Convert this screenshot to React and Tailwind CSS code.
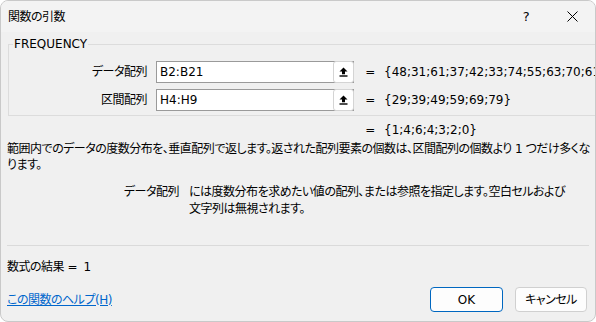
import React from "react";

const font = "font-['DejaVu_Sans','Noto_Sans_CJK_JP',sans-serif] [font-feature-settings:'palt'] tracking-[-0.5px]";

// small "select range" button at the end of each argument box
function RefButton() {
  return (
    <div className="-my-px -mr-px flex h-[22px] w-[21px] items-center justify-center rounded-[3px] border border-[#d4d4d4] bg-white">
      <svg width="9" height="10" viewBox="0 0 9 10">
        <path d="M4.5 0.5 L8.5 4.5 L6 4.5 L6 7.2 L3 7.2 L3 4.5 L0.5 4.5 Z" fill="#000" />
        <rect x="0.5" y="8.3" width="8" height="1.4" fill="#000" />
      </svg>
    </div>
  );
}

function ArgRow({ label, value, result }) {
  return (
    <div className="flex h-[22px] items-center">
      <div className="w-[139px] pr-px text-right">{label}</div>
      <div className="ml-[8px] flex h-[22px] w-[198px] items-center border border-[#9a9a9a] bg-white">
        <div className="flex-1 pl-[3px] tracking-normal">{value}</div>
        <RefButton />
      </div>
      <div className="ml-[8px] w-[16px] text-center">=</div>
      <div className="ml-[6px] mr-[7px] min-w-0 flex-1 overflow-hidden whitespace-nowrap tracking-normal">{result}</div>
    </div>
  );
}

export default function App() {
  return (
    <div className={`h-[322px] w-[596px] bg-white text-[12px] leading-[16px] text-black ${font}`}>
      <div className="flex h-full flex-col overflow-hidden rounded-[8px] border border-[#c9c9c9] bg-[#f0f0f0]">
        {/* title bar */}
        <div className="flex h-[31px] shrink-0 items-center bg-[#f3f3f3] pl-[7px]">
          <span>関数の引数</span>
          <div className="ml-auto flex items-center">
            <div className="w-[46px] text-center text-[13px]">?</div>
            <div className="flex w-[46px] items-center justify-center">
              <svg width="11" height="11" viewBox="0 0 11 11">
                <path d="M0.5 0.5 L10.5 10.5 M10.5 0.5 L0.5 10.5" stroke="#000" strokeWidth="1" />
              </svg>
            </div>
          </div>
        </div>

        <div className="flex flex-1 flex-col px-[6px] pt-[4px]">
          <fieldset className="mx-px border border-[#dcdcdc] px-0 pb-[4px]">
            <legend className="ml-[4px] px-px leading-[16px] tracking-normal">FREQUENCY</legend>
            <div className="mt-[9px] flex flex-col gap-[6px]">
              <ArgRow label="データ配列" value="B2:B21" result="{48;31;61;37;42;33;74;55;63;70;61;42;54;72;46;57;38;52;66;49}" />
              <ArgRow label="区間配列" value="H4:H9" result="{29;39;49;59;69;79}" />
            </div>
          </fieldset>

          <div className="mt-[6px] flex pl-[355px]">
            <div className="w-[16px] text-center">=</div>
            <div className="ml-[6px] tracking-normal">{"{1;4;6;4;3;2;0}"}</div>
          </div>

          <div className="mt-[3px] whitespace-nowrap">
            <div>範囲内でのデータの度数分布を、垂直配列で返します。返された配列要素の個数は、区間配列の個数より 1 つだけ多くな</div>
            <div>ります。</div>
          </div>

          <div className="mt-[11px] flex whitespace-nowrap leading-[17px]">
            <div className="w-[172px] text-right">データ配列</div>
            <div className="ml-[10px]">
              <div>には度数分布を求めたい値の配列、または参照を指定します。空白セルおよび</div>
              <div>文字列は無視されます。</div>
            </div>
          </div>

          <div className="mt-auto border-t border-[#dadada] pt-[13px]">
            <div>数式の結果 =&nbsp;&nbsp;1</div>
            <div className="mt-[12px] flex items-center pb-[9px]">
              <a href="#" className="text-[#0066cc] underline">この関数のヘルプ(H)</a>
              <div className="ml-auto mr-[2px] flex gap-[12px]">
                <button className="h-[25px] w-[73px] rounded-[4px] border border-[#0067c0] bg-[#fdfdfd] tracking-normal">OK</button>
                <button className="h-[25px] w-[72px] rounded-[4px] border border-[#d0d0d0] bg-[#fdfdfd]">キャンセル</button>
              </div>
            </div>
          </div>
        </div>
      </div>
    </div>
  );
}
